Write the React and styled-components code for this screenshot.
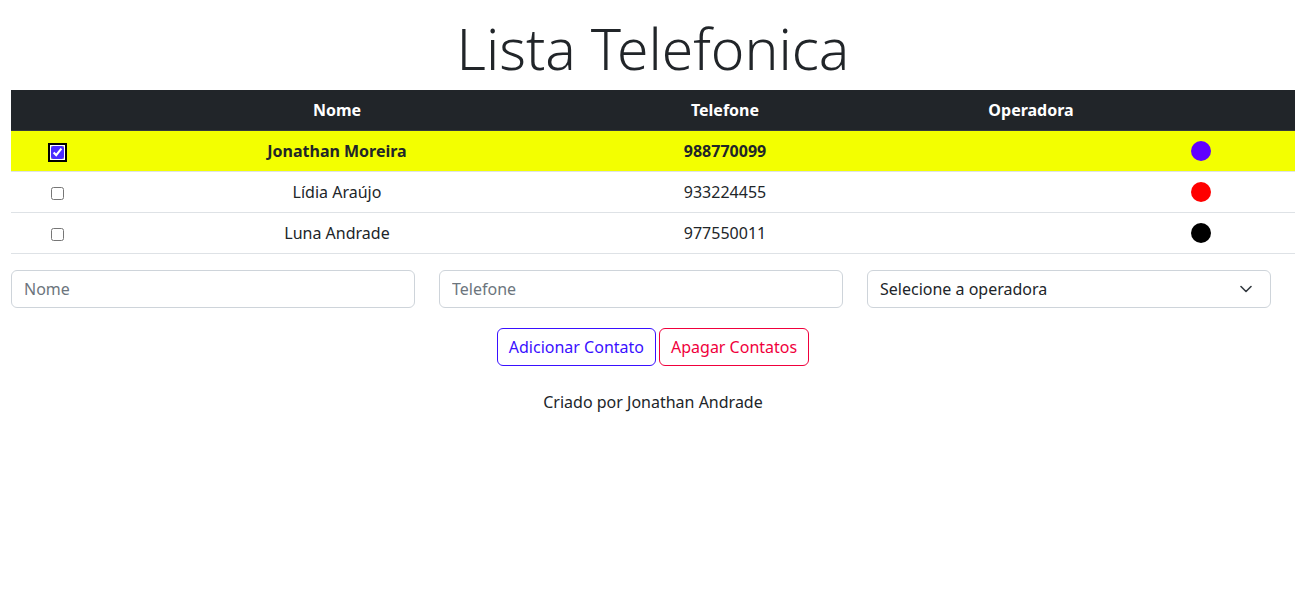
import React, { useState } from 'react';
import styled, { createGlobalStyle } from 'styled-components';

const GlobalStyle = createGlobalStyle`
  body {
    margin: 0;
    background: #fff;
    color: #212529;
    font-family: "Noto Sans", "Open Sans", sans-serif;
    font-size: 16px;
    line-height: 1.5;
  }
  * { box-sizing: border-box; }
`;

const Page = styled.div`
  padding: 15px 10px 0 11px;
`;

const Title = styled.h1`
  margin: 0 0 8px;
  height: 67px;
  text-align: center;
  font-size: 57px;
  font-weight: 300;
  line-height: 67px;
`;

const Table = styled.table`
  width: 100%;
  border-collapse: collapse;
  table-layout: fixed;
`;

const HeadCell = styled.th`
  background: #212529;
  color: #fff;
  font-weight: 700;
  padding: 8px;
  text-align: center;
  border-bottom: 1px solid #373b3e;
`;

const Row = styled.tr`
  background: ${(p) => (p.$selected ? '#f3ff00' : '#fff')};
  font-weight: ${(p) => (p.$selected ? 700 : 400)};
`;

const Cell = styled.td`
  padding: 8px;
  text-align: ${(p) => p.$align || 'center'};
  border-bottom: 1px solid #dee2e6;
  height: 41px;
  vertical-align: middle;
`;

const Check = styled.input`
  margin: 0;
  width: 13px;
  height: 13px;
  vertical-align: middle;
  accent-color: #4a2cff;
  ${(p) => p.checked && `
    box-shadow: 0 0 0 1px #fff;
    outline: 2px solid #000;
    outline-offset: 1px;
    border-radius: 2px;
  `}
`;

const Dot = styled.span`
  display: block;
  width: 20px;
  height: 20px;
  border-radius: 50%;
  background: ${(p) => p.$color};
`;

const Form = styled.div`
  display: grid;
  grid-template-columns: repeat(3, 404px);
  column-gap: 24px;
  margin-top: 16px;
`;

const Input = styled.input`
  height: 38px;
  width: 100%;
  padding: 6px 12px;
  font: inherit;
  color: #212529;
  border: 1px solid #ced4da;
  border-radius: 6px;
  background: #fff;
  &::placeholder { color: #6c757d; }
`;

const SelectBox = styled.div`
  height: 38px;
  display: flex;
  align-items: center;
  justify-content: space-between;
  padding: 6px 18px 6px 12px;
  border: 1px solid #ced4da;
  border-radius: 6px;
  background: #fff;
`;

const Actions = styled.div`
  display: flex;
  justify-content: center;
  gap: 3px;
  margin-top: 20px;
`;

const Button = styled.button`
  height: 38px;
  padding: 6px 11px;
  font: inherit;
  background: #fff;
  color: ${(p) => p.$color};
  border: 1px solid ${(p) => p.$color};
  border-radius: 6px;
  cursor: pointer;
`;

const Footer = styled.p`
  margin: 24px 0 0;
  text-align: center;
`;

const contacts = [
  { nome: 'Jonathan Moreira', telefone: '988770099', cor: '#6000ff', selected: true },
  { nome: 'Lídia Araújo', telefone: '933224455', cor: '#ff0000' },
  { nome: 'Luna Andrade', telefone: '977550011', cor: '#000000' },
];

export default function App() {
  const [list, setList] = useState(contacts);
  const toggle = (i) =>
    setList(list.map((c, j) => (j === i ? { ...c, selected: !c.selected } : c)));

  return (
    <Page>
      <GlobalStyle />
      <Title>Lista Telefonica</Title>
      <Table>
        <colgroup>
          <col style={{ width: 92 }} />
          <col style={{ width: 468 }} />
          <col style={{ width: 308 }} />
          <col style={{ width: 304 }} />
          <col style={{ width: 112 }} />
        </colgroup>
        <thead>
          <tr>
            <HeadCell />
            <HeadCell>Nome</HeadCell>
            <HeadCell>Telefone</HeadCell>
            <HeadCell>Operadora</HeadCell>
            <HeadCell />
          </tr>
        </thead>
        <tbody>
          {list.map((c, i) => (
            <Row key={c.nome} $selected={c.selected}>
              <Cell>
                <Check type="checkbox" checked={!!c.selected} onChange={() => toggle(i)} />
              </Cell>
              <Cell>{c.nome}</Cell>
              <Cell>{c.telefone}</Cell>
              <Cell />
              <Cell $align="left">
                <Dot $color={c.cor} />
              </Cell>
            </Row>
          ))}
        </tbody>
      </Table>
      <Form>
        <Input placeholder="Nome" />
        <Input placeholder="Telefone" />
        <SelectBox>
          <span>Selecione a operadora</span>
          <svg width="12" height="8" viewBox="0 0 12 8" fill="none">
            <path d="M1 1.5l5 5 5-5" stroke="#343a40" strokeWidth="1.6" strokeLinecap="round" strokeLinejoin="round" />
          </svg>
        </SelectBox>
      </Form>
      <Actions>
        <Button $color="#3a10ff">Adicionar Contato</Button>
        <Button $color="#f0003c">Apagar Contatos</Button>
      </Actions>
      <Footer>Criado por Jonathan Andrade</Footer>
    </Page>
  );
}
